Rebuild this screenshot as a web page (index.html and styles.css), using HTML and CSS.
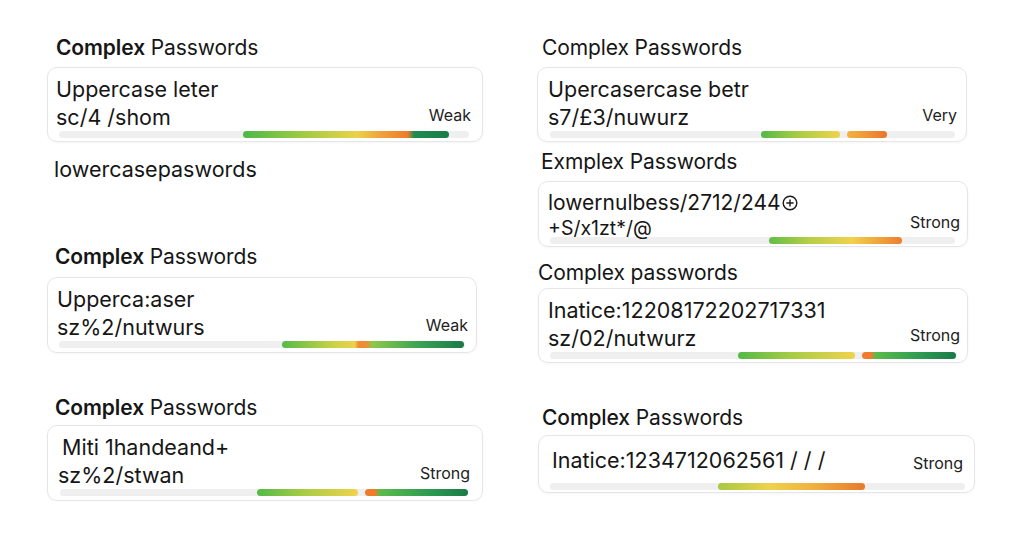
FILE: index.html
```html
<!DOCTYPE html>
<html lang="en">
<head>
    <meta charset="UTF-8">
    <meta name="viewport" content="width=device-width, initial-scale=1.0">
    <title>Complex Passwords</title>
    <link rel="stylesheet" href="styles.css">
</head>
<body>
    <div class="board">
        <!-- Left column -->
        <div class="column">
            <h2 class="title"><b>Complex</b> Passwords</h2>
            <div class="card c1">
                <div class="line">Uppercase leter</div>
                <div class="row">
                    <span class="line">sc/4 /shom</span>
                    <span class="label">Weak</span>
                </div>
                <div class="meter">
                    <span class="seg g-mixed" style="margin-left:184px;width:206px"></span>
                </div>
            </div>

            <p class="loose">lowercasepaswords</p>

            <h2 class="title title-2"><b>Complex</b> Passwords</h2>
            <div class="card c2">
                <div class="line">Upperca:aser</div>
                <div class="row">
                    <span class="line">sz%2/nutwurs</span>
                    <span class="label">Weak</span>
                </div>
                <div class="meter">
                    <span class="seg g-spot" style="margin-left:223px;width:182px"></span>
                </div>
            </div>

            <h2 class="title title-3"><b>Complex</b> Passwords</h2>
            <div class="card c3">
                <div class="line indent">Miti 1handeand+</div>
                <div class="row">
                    <span class="line">sz%2/stwan</span>
                    <span class="label">Strong</span>
                </div>
                <div class="meter">
                    <span class="seg g-gy" style="margin-left:197px;width:101px"></span>
                    <span class="seg g-og" style="margin-left:7px;width:103px"></span>
                </div>
            </div>
        </div>

        <!-- Right column -->
        <div class="column">
            <h2 class="title title-r">Complex Passwords</h2>
            <div class="card c4">
                <div class="line">Upercasercase betr</div>
                <div class="row">
                    <span class="line">s7/£3/nuwurz</span>
                    <span class="label">Very</span>
                </div>
                <div class="meter">
                    <span class="seg g-gy" style="margin-left:211px;width:79px"></span>
                    <span class="seg g-yo" style="margin-left:7px;width:40px"></span>
                </div>
            </div>

            <h2 class="title title-r title-r2">Exmplex Passwords</h2>
            <div class="card c5">
                <div class="line">lowernulbess/2712/244<svg class="plus" width="16" height="16" viewBox="0 0 16 16"><circle cx="8" cy="8" r="6.8" fill="none" stroke="#1b1b1b" stroke-width="1.4"/><path d="M8 4.4v7.2M4.4 8h7.2" stroke="#1b1b1b" stroke-width="1.4"/></svg></div>
                <div class="row">
                    <span class="line small">+S/x1zt*/@</span>
                    <span class="label">Strong</span>
                </div>
                <div class="meter">
                    <span class="seg g-gyo" style="margin-left:219px;width:133px"></span>
                </div>
            </div>

            <h2 class="title title-r title-r3">Complex passwords</h2>
            <div class="card c6">
                <div class="line">Inatice:12208172202717331</div>
                <div class="row">
                    <span class="line">sz/02/nutwurz</span>
                    <span class="label">Strong</span>
                </div>
                <div class="meter">
                    <span class="seg g-gy" style="margin-left:188px;width:117px"></span>
                    <span class="seg g-og" style="margin-left:7px;width:94px"></span>
                </div>
            </div>

            <h2 class="title title-r title-r4"><b class="medium">Complex</b> Passwords</h2>
            <div class="card c7">
                <div class="row">
                    <span class="line">Inatice:1234712062561 / / /</span>
                    <span class="label">Strong</span>
                </div>
                <div class="meter">
                    <span class="seg g-warm" style="margin-left:168px;width:147px"></span>
                </div>
            </div>
        </div>
    </div>
</body>
</html>
```

FILE: styles.css
```css
body {
    margin: 0;
    padding: 0;
    background: #ffffff;
    color: #161616;
    font-family: Inter, "Noto Sans", sans-serif;
}
.board {
    display: grid;
    grid-template-columns: 436px 438px;
    column-gap: 54px;
    padding: 36px 0 0 47px;
}
.column {
    display: flex;
    flex-direction: column;
    align-items: flex-start;
}
.title {
    margin: 0 0 7px 9px;
    font-size: 21px;
    line-height: 24px;
    font-weight: 400;
    letter-spacing: -0.1px;
}
.title b {
    font-weight: 600;
}
.title b.medium {
    font-weight: 500;
}
.title-2 {
    margin-top: 64px;
    margin-bottom: 8px;
    margin-left: 8px;
}
.title-3 {
    margin-top: 43px;
    margin-bottom: 5px;
    margin-left: 8px;
}
.title-r {
    margin-left: 5px;
}
.title-r2 {
    margin-top: 8px;
    margin-left: 4px;
}
.title-r3 {
    margin-top: 14px;
    margin-bottom: 3px;
    margin-left: 1px;
}
.title-r4 {
    margin-top: 43px;
    margin-bottom: 5px;
}
.loose {
    margin: 15px 0 0 7px;
    font-size: 21.5px;
    line-height: 24px;
}
.card {
    box-sizing: border-box;
    width: 100%;
    padding: 7px 11px 3px 8px;
    border: 1px solid #e6e6e6;
    border-radius: 10px;
    box-shadow: 0 1px 3px rgba(0, 0, 0, 0.04);
}
.line {
    display: block;
    font-size: 21.5px;
    line-height: 28px;
    white-space: nowrap;
}
.indent {
    padding-left: 4px;
}
.row {
    display: flex;
    justify-content: space-between;
    align-items: center;
}
.label {
    margin-bottom: 4px;
    font-size: 16px;
    line-height: 19px;
    color: #222222;
}
.meter {
    display: flex;
    height: 7px;
    margin: 0 2px 0 3px;
    border-radius: 4px;
    background: #efefef;
}
.seg {
    display: block;
    height: 100%;
    border-radius: 4px;
}

/* per card spacing */
.c2 {
    width: 430px;
    padding: 7px 8px 4px 9px;
}
.c2 .meter {
    margin: 0 3px 0 2px;
}
.c3 {
    padding: 7px 12px 4px 10px;
}
.c3 .meter {
    margin: 0 2px 0 2px;
}
.c4 {
    width: 430px;
    padding: 7px 9px 3px 10px;
}
.c4 .meter {
    margin: 0 2px 0 2px;
}

/* right column, second card: two tight lines */
.c5 {
    width: 430px;
    margin-left: 1px;
    padding: 8px 7px 2px 9px;
}
.c5 > .line {
    font-size: 21px;
    line-height: 25.5px;
}
.c5 .small {
    font-size: 19.5px;
    line-height: 24px;
}
.c5 .label {
    margin-bottom: 0;
    line-height: 20px;
    transform: translateY(-6px);
}
.c5 .meter {
    margin: -3px 5px 0 2px;
}
.plus {
    margin-left: 1px;
    vertical-align: -1px;
}
.c6 {
    width: 430px;
    margin-left: 1px;
    padding: 7px 7px 3px 9px;
}
.c6 .meter {
    margin: 0 3px 0 2px;
}

/* right column, last card: one line only */
.c7 {
    width: 437px;
    margin-left: 1px;
    padding: 10px 11px 2px 13px;
}
.c7 .row {
    align-items: flex-end;
}
.c7 .label {
    margin-bottom: 0;
    line-height: 22px;
}
.c7 .meter {
    margin: 9px -2px 0 -2px;
}

/* gradients */
.g-mixed {
    background: linear-gradient(90deg, #4cb848 0%, #9ccb42 28%, #ead24a 55%, #f0a63c 66%, #ee7b2a 80%, #1f8c50 83%, #1a7c48 100%);
}
.g-spot {
    background: linear-gradient(90deg, #55bb48 0%, #c9d245 28%, #ecd24a 40%, #f08d34 42%, #f08d34 46%, #8dc84a 50%, #3aa454 75%, #1a7a48 100%);
}
.g-gy {
    background: linear-gradient(90deg, #52b948 0%, #a6cc44 45%, #f0d34c 100%);
}
.g-og {
    background: linear-gradient(90deg, #ee7c2c 0%, #ee7c2c 10%, #5cbb4a 14%, #2f9c52 60%, #1a7a48 100%);
}
.g-yo {
    background: linear-gradient(90deg, #f2b440 0%, #ee8a32 70%, #e8722a 100%);
}
.g-gyo {
    background: linear-gradient(90deg, #62bd48 0%, #b4cf46 30%, #f0d24c 62%, #ee7e2c 100%);
}
.g-warm {
    background: linear-gradient(90deg, #a8c842 0%, #eed24c 35%, #f0b040 65%, #e87a2c 100%);
}
```
